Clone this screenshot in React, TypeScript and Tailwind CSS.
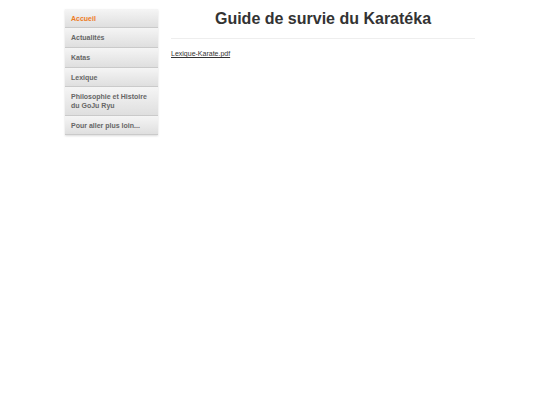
const items = [
  { label: "Accueil", active: true, h: "h-[19px]" },
  { label: "Actualités", h: "h-[20px]" },
  { label: "Katas", h: "h-[20px]" },
  { label: "Lexique", h: "h-[19px]" },
  { label: "Philosophie et Histoire du GoJu Ryu", h: "h-[29px]" },
  { label: "Pour aller plus loin...", h: "h-[19px]" },
];

export default function App() {
  return (
    <div className="min-h-[405px] bg-white font-['Liberation_Sans',Arial,sans-serif]">
      <div className="mx-auto flex w-[410px] gap-[13px] pt-[8px]">
        <nav className="mt-[1px] w-[93px] shrink-0 self-start shadow-[0_1px_2px_rgba(0,0,0,0.15)]">
          {items.map((it) => (
            <div
              key={it.label}
              className={`${it.h} flex items-center border-b border-[#cacaca] bg-gradient-to-b from-[#f5f5f5] to-[#dfdfdf] px-[6px] text-[7px] font-bold leading-[9px] ${
                it.active ? "text-[#ee7a1e]" : "text-[#666666]"
              }`}
            >
              <span className={it.label.startsWith("Philosophie") ? "w-[78px]" : ""}>{it.label}</span>
            </div>
          ))}
        </nav>
        <main className="w-[304px]">
          <h1 className="pt-[2px] text-center text-[16px] font-bold leading-[18px] text-[#333]">
            Guide de survie du Karatéka
          </h1>
          <div className="mt-[10px] h-px bg-[#eeeeee]" />
          <a href="#" className="mt-[8px] inline-block text-[7px] leading-[9px] text-[#333] underline">
            Lexique-Karate.pdf
          </a>
        </main>
      </div>
    </div>
  );
}
